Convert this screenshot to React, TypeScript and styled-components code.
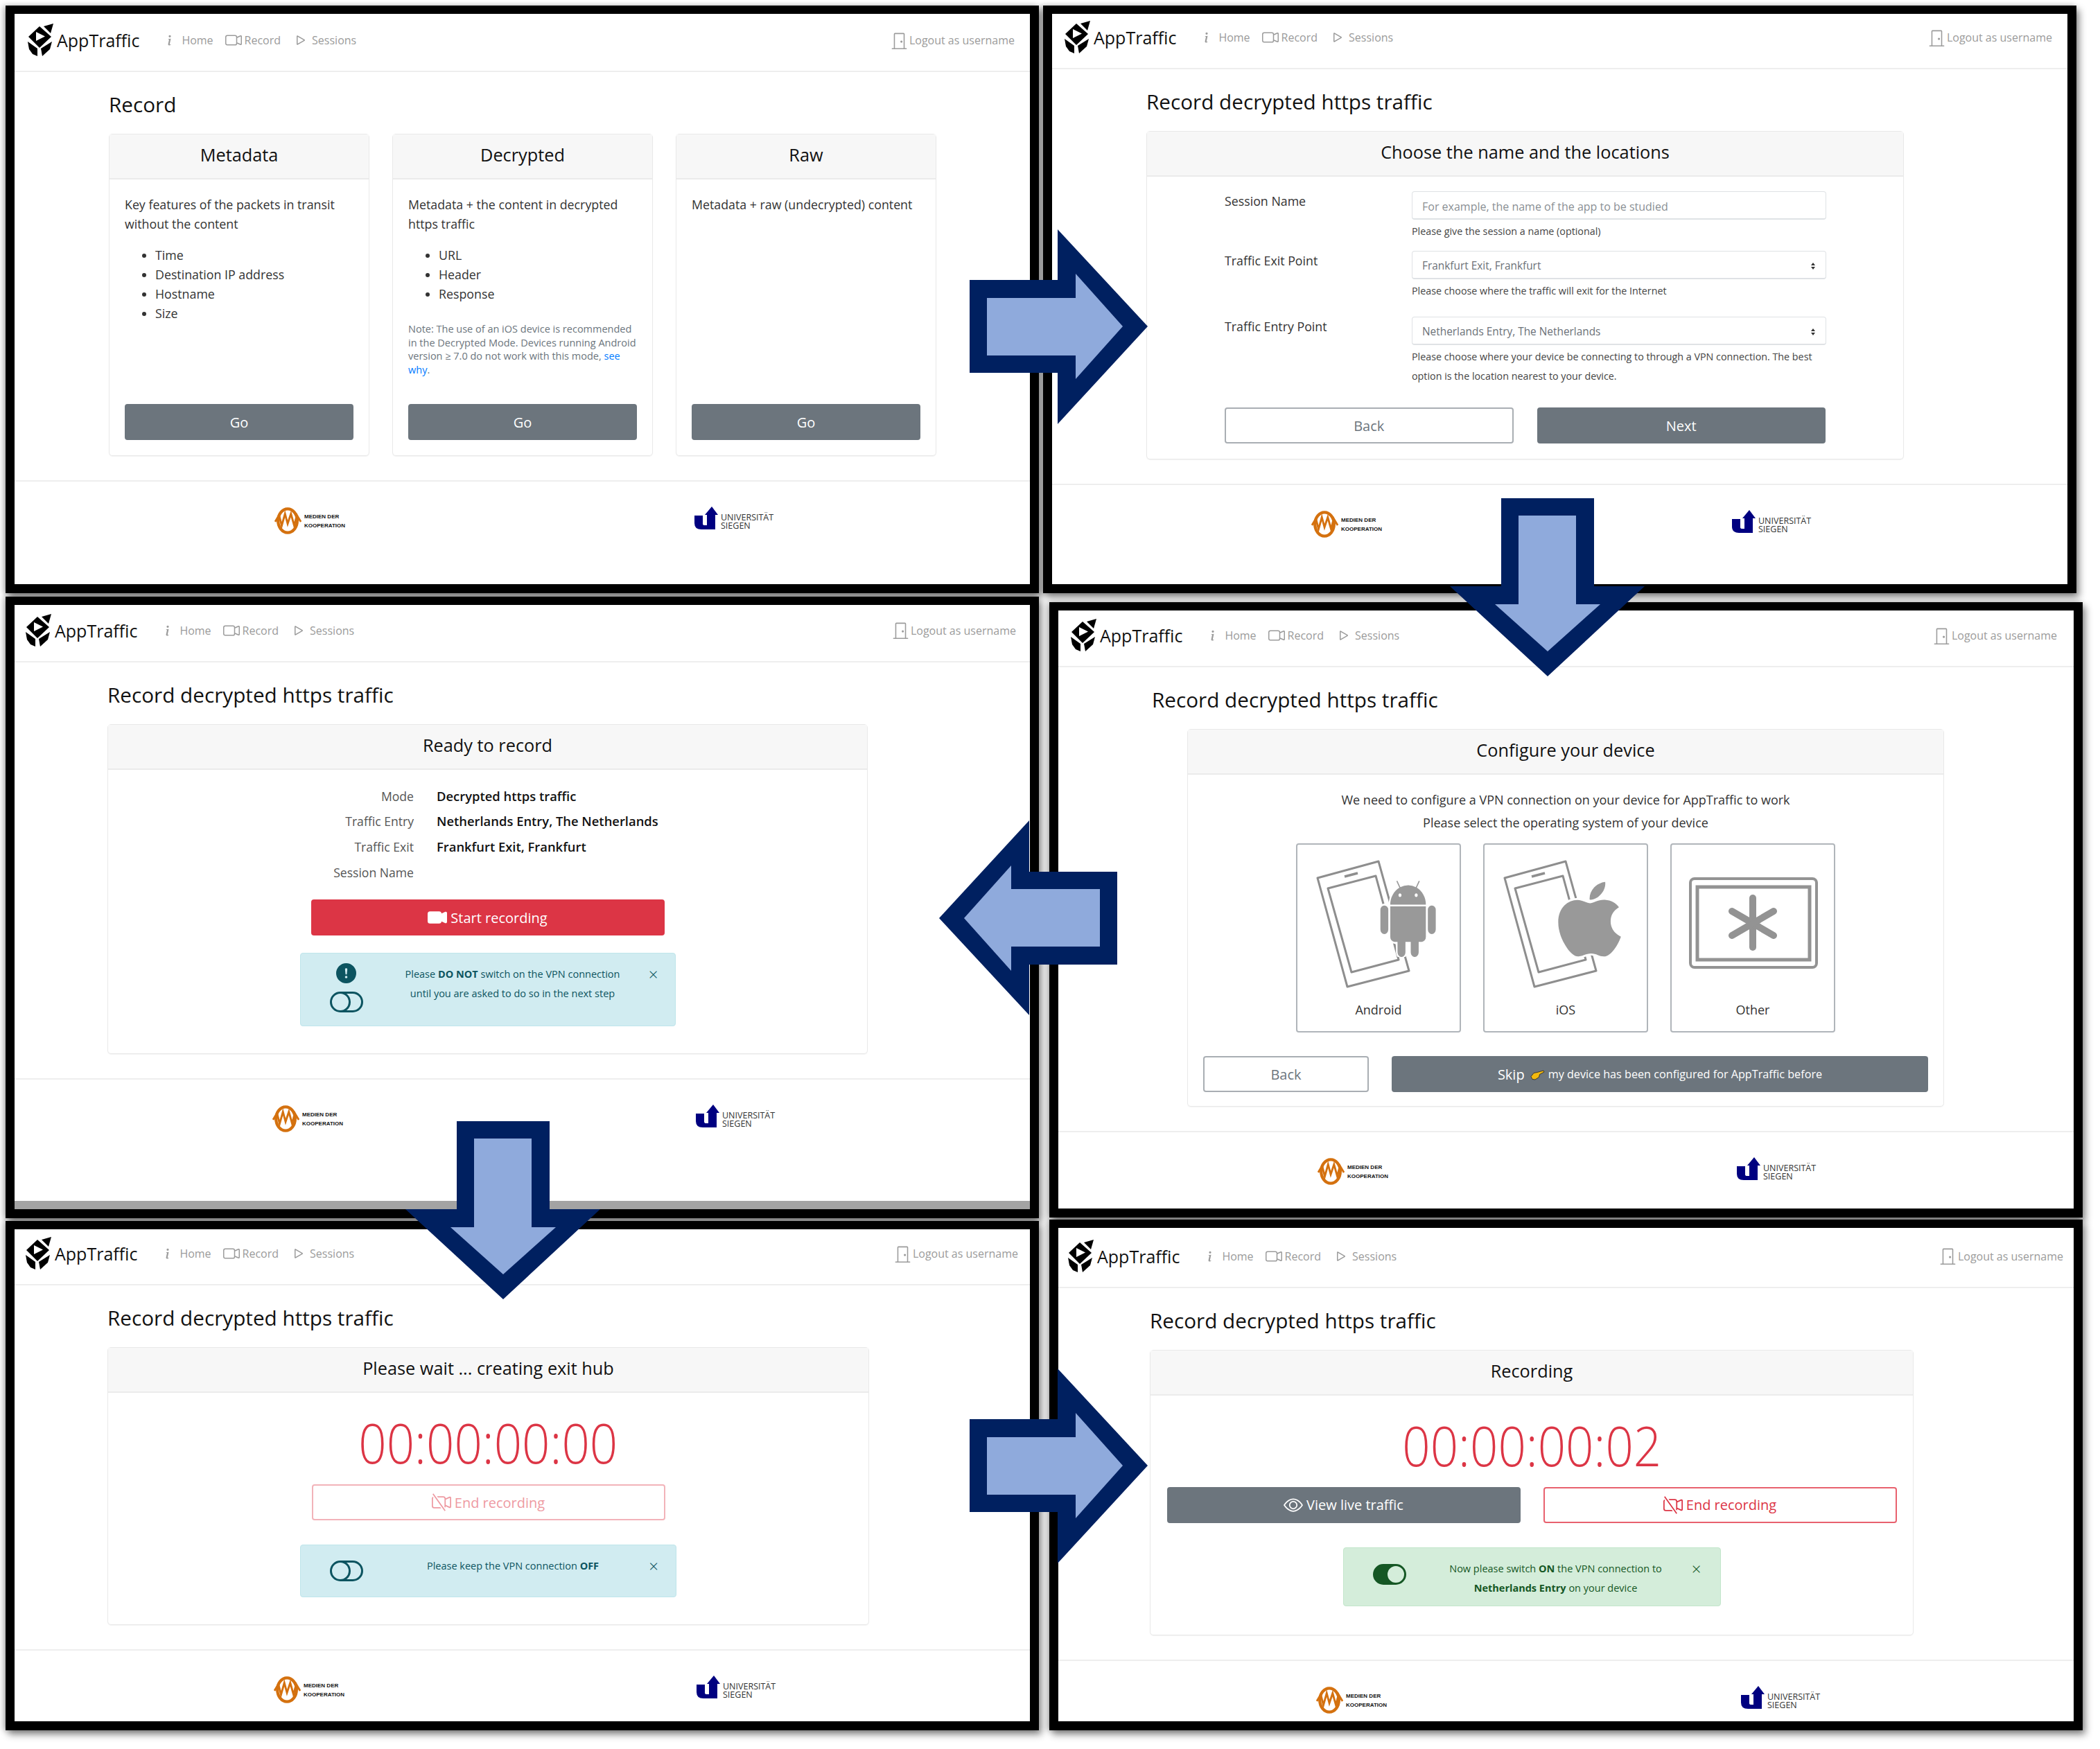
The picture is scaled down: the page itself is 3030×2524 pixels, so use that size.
import React from "react";
import styled, { createGlobalStyle } from "styled-components";
import { FaApple } from "react-icons/fa";
import {
  BsAndroid2,
  BsCameraVideo,
  BsCameraVideoFill,
  BsCameraVideoOff,
  BsDoorClosed,
  BsExclamationCircleFill,
  BsEye,
  BsInfo,
  BsPlay,
  BsToggleOff,
  BsToggleOn,
} from "react-icons/bs";

const GlobalStyle = createGlobalStyle`
  html, body {
    margin: 0;
    background: #fff;
  }
  body {
    font-family: "Open Sans", "Liberation Sans", sans-serif;
    color: #212529;
  }
  * {
    box-sizing: border-box;
  }
`;

const Page = styled.div`
  position: relative;
  display: flex;
  width: 3030px;
  height: 2524px;
  padding: 8px 0 0 8px;
  overflow: hidden;
  background: #fff;
`;

const Column = styled.div<{ $ml?: number }>`
  display: flex;
  flex-direction: column;
  width: 1491px;
  margin-left: ${(p) => p.$ml ?? 0}px;
`;

const Shot = styled.section<{ $h: number; $mt: number; $ml: number }>`
  width: 1491px;
  height: ${(p) => p.$h}px;
  margin-top: ${(p) => p.$mt}px;
  margin-left: ${(p) => p.$ml}px;
  border: 13px solid #000;
  border-top-width: 12px;
  box-shadow: 4px 6px 10px rgba(0, 0, 0, 0.45), -3px 0 8px rgba(0, 0, 0, 0.25);
`;

const Inner = styled.div<{ $strip?: boolean }>`
  height: 100%;
  background: #fff;
  overflow: hidden;
  box-shadow: ${(p) => (p.$strip ? "inset 0 -12px 0 #a3a3a3" : "none")};
`;

const Nav = styled.header<{ $h: number; $l: number; $r: number }>`
  display: flex;
  align-items: flex-end;
  height: ${(p) => p.$h}px;
  padding: 0 ${(p) => p.$r}px 20px ${(p) => p.$l}px;
  border-bottom: 2px solid #eee;
`;

const NavRow = styled.div`
  display: flex;
  flex: 1;
  align-items: center;
  height: 48px;
`;

const Brand = styled.div`
  display: flex;
  align-items: center;
  gap: 5px;
  font-size: 25px;
  color: #111;
`;

const NavLinks = styled.nav`
  display: flex;
  align-items: center;
  gap: 17px;
  margin-left: 31px;
`;

const NavLink = styled.span`
  display: flex;
  align-items: center;
  gap: 4px;
  font-size: 16px;
  color: #9b9b9b;
`;

const Logout = styled(NavLink)`
  margin-left: auto;
  gap: 2px;
`;

const Main = styled.main<{ $l: number }>`
  padding: 26px 0 0 ${(p) => p.$l}px;
`;

const Title = styled.h1`
  margin: 0 0 21px;
  font-size: 29.7px;
  font-weight: 500;
  line-height: 42px;
  color: #111;
`;

const CardRow = styled.div`
  display: grid;
  grid-template-columns: repeat(3, 376px);
  gap: 33px;
`;

const Card = styled.div<{ $w: number; $h: number; $ml?: number }>`
  display: flex;
  flex-direction: column;
  width: ${(p) => p.$w}px;
  height: ${(p) => p.$h}px;
  margin-left: ${(p) => p.$ml ?? 0}px;
  border: 1px solid #e9e9e9;
  border-radius: 5px;
  box-shadow: 0 1px 1px rgba(0, 0, 0, 0.05);
`;

const CardHeader = styled.div`
  display: flex;
  flex: none;
  align-items: center;
  justify-content: center;
  height: 65px;
  padding-bottom: 5px;
  background: #f7f7f7;
  border-bottom: 2px solid #ebebeb;
  font-size: 25.3px;
  font-weight: 500;
  color: #111;
`;

const ChoiceBody = styled.div`
  display: flex;
  flex: 1;
  flex-direction: column;
  padding: 22px;
  font-size: 17.8px;
  line-height: 28px;
  color: #333;
`;

const Para = styled.p`
  margin: 0;
`;

const Bullets = styled.ul`
  margin: 17px 0 0;
  padding-left: 44px;
`;

const Note = styled.p`
  margin: 27px 0 0;
  font-size: 14.5px;
  line-height: 19.5px;
  color: #6c757d;
  a {
    color: #007bff;
  }
`;

const Btn = styled.button<{ $kind: "gray" | "line" | "red" | "redLine" | "redOff"; $w?: number }>`
  display: flex;
  flex: ${(p) => (p.$w ? "none" : "1")};
  align-items: center;
  justify-content: center;
  gap: 5px;
  width: ${(p) => (p.$w ? `${p.$w}px` : "auto")};
  height: 52px;
  padding: 0;
  border-radius: 4px;
  font-family: inherit;
  font-size: 20px;
  border: 2px solid
    ${(p) =>
      ({ gray: "#6c757d", line: "#a9aeb3", red: "#dc3545", redLine: "#e8616e", redOff: "#f2b3b9" })[p.$kind]};
  background: ${(p) => ({ gray: "#6c757d", line: "#fff", red: "#dc3545", redLine: "#fff", redOff: "#fff" })[p.$kind]};
  color: ${(p) => ({ gray: "#fff", line: "#6c757d", red: "#fff", redLine: "#dc3545", redOff: "#ee9aa2" })[p.$kind]};
`;

const GoButton = styled(Btn)`
  flex: none;
  margin-top: auto;
`;

const FormBody = styled.div`
  padding: 21px 112px 0;
`;

const FormRow = styled.div<{ $mb: number }>`
  display: grid;
  grid-template-columns: 270px 598px;
  margin-bottom: ${(p) => p.$mb}px;
`;

const FieldLabel = styled.label`
  font-size: 17.8px;
  line-height: 28px;
  color: #333;
`;

const NameInput = styled.input`
  display: block;
  width: 100%;
  height: 41px;
  padding: 3px 14px 0;
  border: 1px solid #dfe2e5;
  border-bottom-width: 2px;
  border-radius: 4px;
  font-family: inherit;
  font-size: 16px;
  &::placeholder {
    color: #8a8f94;
  }
`;

const FakeSelect = styled.div`
  display: flex;
  align-items: center;
  justify-content: space-between;
  height: 41px;
  padding: 3px 14px 0;
  border: 1px solid #dfe2e5;
  border-bottom-width: 2px;
  border-radius: 4px;
  font-size: 15.4px;
  color: #6b7178;
`;

const Help = styled.div`
  margin-top: 3px;
  font-size: 14.3px;
  line-height: 28px;
  color: #444;
`;

const ButtonRow = styled.div<{ $mt?: number; $gap: number; $px?: number }>`
  display: flex;
  gap: ${(p) => p.$gap}px;
  margin-top: ${(p) => p.$mt ?? 0}px;
  padding: 0 ${(p) => p.$px ?? 0}px;
`;

const SummaryBody = styled.div`
  display: flex;
  flex-direction: column;
  align-items: center;
  padding-top: 20px;
`;

const Summary = styled.dl`
  display: grid;
  grid-template-columns: 441px 1fr;
  column-gap: 33px;
  align-self: stretch;
  margin: 0 0 21px;
  font-size: 17.6px;
  line-height: 36.7px;
`;

const SummaryKey = styled.dt`
  text-align: right;
  color: #555;
`;

const SummaryValue = styled.dd`
  margin: 0;
  font-size: 18.4px;
  font-weight: 600;
  color: #111;
`;

const WideButton = styled(Btn)`
  flex: none;
  width: 510px;
`;

const Alert = styled.div<{ $tone: "info" | "ok"; $h: number; $w: number; $mt: number }>`
  display: grid;
  grid-template-columns: 132px 348px 58px;
  width: ${(p) => p.$w}px;
  height: ${(p) => p.$h}px;
  margin-top: ${(p) => p.$mt}px;
  border: 1px solid ${(p) => (p.$tone === "ok" ? "#c3e6cb" : "#bee5eb")};
  border-radius: 4px;
  background: ${(p) => (p.$tone === "ok" ? "#d4edda" : "#d1ecf1")};
  color: ${(p) => (p.$tone === "ok" ? "#155724" : "#0c5460")};
`;

const AlertIcons = styled.div<{ $top: number }>`
  display: flex;
  flex-direction: column;
  align-items: center;
  gap: 3px;
  padding-top: ${(p) => p.$top}px;
`;

const AlertText = styled.div`
  padding-top: 16px;
  font-size: 14.5px;
  line-height: 28px;
  text-align: center;
  white-space: nowrap;
`;

const AlertClose = styled.div`
  padding-top: 16px;
  font-size: 24px;
  font-weight: 300;
  line-height: 28px;
  text-align: center;
`;

const TileBody = styled.div`
  padding: 20px 22px 0;
`;

const CenterLine = styled.div`
  font-size: 18px;
  line-height: 33px;
  text-align: center;
  color: #333;
`;

const Tiles = styled.div`
  display: flex;
  justify-content: center;
  gap: 32px;
  margin-top: 13px;
`;

const Tile = styled.div`
  display: flex;
  flex-direction: column;
  align-items: center;
  width: 238px;
  height: 273px;
  border: 2px solid #b0b5ba;
  border-radius: 4px;
  font-size: 18px;
  color: #333;
`;

const TileArt = styled.svg`
  flex: none;
  width: 234px;
  height: 224px;
`;

const TileLabel = styled.div`
  line-height: 28px;
`;

const RobotIcon = styled(BsAndroid2)`
  color: #999;
  stroke: #fff;
  stroke-width: 0.8px;
  paint-order: stroke;
`;

const AppleIcon = styled(FaApple)`
  color: #999;
  stroke: #fff;
  stroke-width: 24px;
  paint-order: stroke;
`;

const SkipNote = styled.span`
  font-size: 16.2px;
`;

const Hand = styled.svg`
  width: 21px;
  height: 15px;
  margin: 3px 0 0 3px;
`;

const TimerBody = styled.div`
  display: flex;
  flex-direction: column;
  align-items: center;
  padding-top: 21px;
`;

const Timer = styled.div`
  margin-bottom: 11px;
  font-size: 80px;
  font-weight: 300;
  line-height: 100px;
  color: #dc3545;
  transform: scaleX(0.885);
`;

const Footer = styled.footer<{ $a: number; $b: number }>`
  display: flex;
  align-items: flex-start;
  gap: ${(p) => p.$b - p.$a - 102}px;
  margin-top: 35px;
  padding: 36px 0 0 ${(p) => p.$a}px;
  border-top: 2px solid #eee;
`;

const LogoBlock = styled.div`
  display: flex;
  flex: none;
  gap: 4px;
  width: 102px;
`;

const MdkText = styled.div`
  margin-top: 8px;
  font-family: "Liberation Sans", sans-serif;
  font-size: 8px;
  font-weight: 700;
  line-height: 13px;
  white-space: nowrap;
  color: #111;
`;

const SiegenText = styled.div`
  margin-top: 10px;
  font-size: 12.5px;
  line-height: 12px;
  white-space: nowrap;
  color: #333;
`;

const ArrowMark = styled.svg<{ $x: number; $y: number; $deg: number }>`
  position: absolute;
  left: ${(p) => p.$x}px;
  top: ${(p) => p.$y}px;
  width: 257px;
  height: 281px;
  transform: rotate(${(p) => p.$deg}deg);
`;

function Arrow({ x, y, deg }: { x: number; y: number; deg: number }) {
  return (
    <ArrowMark $x={x} $y={y} $deg={deg} viewBox="0 0 257 281">
      <polygon points="0,73 127,73 127,0 257,140 127,281 127,207 0,207" fill="#002060" />
      <polygon points="25,99 153,99 153,64 221,140 153,216 153,182 25,182" fill="#8faadc" />
    </ArrowMark>
  );
}

function AppLogo() {
  return (
    <svg width="38" height="50" viewBox="9 8 38 50">
      <path d="M11 28 27 13 44 28 27 44Z M22 21 V34 L35 27.5Z" fill="#000" fillRule="evenodd" />
      <polygon points="33,13 47,9 43,23" fill="#000" />
      <polygon points="10,35 24,45 24,56 17,53 12,46" fill="#000" />
      <polygon points="29,45 45,35 42,46 31,56" fill="#000" />
    </svg>
  );
}

function MdkLogo() {
  return (
    <LogoBlock>
      <svg width="41" height="41" viewBox="0 0 41 41" fill="none" stroke="#d4710f">
        <ellipse cx="20" cy="20.5" rx="14.5" ry="18" strokeWidth="4.5" />
        <path d="M1 22 7 12 11 28 16 10 20 25 25 10 30 28 34 12 40 22" strokeWidth="3" />
      </svg>
      <MdkText>
        MEDIEN DER
        <br />
        KOOPERATION
      </MdkText>
    </LogoBlock>
  );
}

function SiegenLogo() {
  return (
    <LogoBlock>
      <svg width="34" height="33" viewBox="0 0 34 33" style={{ flex: "none" }}>
        <path d="M0 13H12V25Q12 27 15 27H18V12H15L25 0 34 12H30V33H10Q0 33 0 24Z" fill="#000080" />
      </svg>
      <SiegenText>
        UNIVERSITÄT
        <br />
        SIEGEN
      </SiegenText>
    </LogoBlock>
  );
}

function Frame(props: {
  h: number;
  mt?: number;
  ml?: number;
  nav: number;
  l: number;
  r: number;
  main: number;
  a: number;
  b: number;
  title: string;
  strip?: boolean;
  children: React.ReactNode;
}) {
  return (
    <Shot $h={props.h} $mt={props.mt ?? 0} $ml={props.ml ?? 0}>
      <Inner $strip={props.strip}>
        <Nav $h={props.nav} $l={props.l} $r={props.r}>
          <NavRow>
            <Brand>
              <AppLogo />
              AppTraffic
            </Brand>
            <NavLinks>
              <NavLink>
                <BsInfo size={26} />
                Home
              </NavLink>
              <NavLink>
                <BsCameraVideo size={24} />
                Record
              </NavLink>
              <NavLink>
                <BsPlay size={24} />
                Sessions
              </NavLink>
            </NavLinks>
            <Logout>
              <BsDoorClosed size={25} />
              Logout as username
            </Logout>
          </NavRow>
        </Nav>
        <Main $l={props.main}>
          <Title>{props.title}</Title>
          {props.children}
        </Main>
        <Footer $a={props.a} $b={props.b}>
          <MdkLogo />
          <SiegenLogo />
        </Footer>
      </Inner>
    </Shot>
  );
}

function PhoneOutline() {
  return (
    <g fill="none" stroke="#8e8e8e" strokeWidth="3" strokeLinejoin="round">
      <polygon points="29,48 117,24 161,182 72,205" />
      <polygon points="44,63 113,45 146,166 78,184" />
      <line x1="68" y1="46" x2="87" y2="41" strokeWidth="3.5" />
    </g>
  );
}

const choices = [
  {
    name: "Metadata",
    text: "Key features of the packets in transit without the content",
    items: ["Time", "Destination IP address", "Hostname", "Size"],
  },
  {
    name: "Decrypted",
    text: "Metadata + the content in decrypted https traffic",
    items: ["URL", "Header", "Response"],
    note: true,
  },
  { name: "Raw", text: "Metadata + raw (undecrypted) content", items: [] as string[] },
];

const Caret = () => (
  <svg width="8" height="12" viewBox="0 0 8 12" fill="#333">
    <polygon points="4,1 7,5 1,5" />
    <polygon points="4,11 7,7 1,7" />
  </svg>
);

export default function App() {
  return (
    <Page>
      <GlobalStyle />
      <Column>
        <Frame h={848} nav={84} l={18} r={22} main={136} a={375} b={981} title="Record">
          <CardRow>
            {choices.map((c) => (
              <Card key={c.name} $w={376} $h={465}>
                <CardHeader>{c.name}</CardHeader>
                <ChoiceBody>
                  <Para>{c.text}</Para>
                  {c.items.length > 0 && (
                    <Bullets>
                      {c.items.map((i) => (
                        <li key={i}>{i}</li>
                      ))}
                    </Bullets>
                  )}
                  {c.note && (
                    <Note>
                      Note: The use of an iOS device is recommended in the Decrypted Mode. Devices running Android
                      <br />
                      version ≥ 7.0 do not work with this mode, <a>see</a>
                      <br />
                      <a>why</a>.
                    </Note>
                  )}
                  <GoButton $kind="gray">Go</GoButton>
                </ChoiceBody>
              </Card>
            ))}
          </CardRow>
        </Frame>

        <Frame
          h={897}
          mt={5}
          nav={82.5}
          l={15}
          r={20}
          main={134}
          a={372}
          b={983}
          title="Record decrypted https traffic"
          strip
        >
          <Card $w={1097} $h={476}>
            <CardHeader>Ready to record</CardHeader>
            <SummaryBody>
              <Summary>
                <SummaryKey>Mode</SummaryKey>
                <SummaryValue>Decrypted https traffic</SummaryValue>
                <SummaryKey>Traffic Entry</SummaryKey>
                <SummaryValue>Netherlands Entry, The Netherlands</SummaryValue>
                <SummaryKey>Traffic Exit</SummaryKey>
                <SummaryValue>Frankfurt Exit, Frankfurt</SummaryValue>
                <SummaryKey>Session Name</SummaryKey>
                <SummaryValue />
              </Summary>
              <WideButton $kind="red">
                <BsCameraVideoFill size={28} />
                Start recording
              </WideButton>
              <Alert $tone="info" $w={542} $h={106} $mt={25}>
                <AlertIcons $top={14}>
                  <BsExclamationCircleFill size={29} />
                  <BsToggleOff size={48} />
                </AlertIcons>
                <AlertText>
                  Please <b>DO NOT</b> switch on the VPN connection
                  <br />
                  until you are asked to do so in the next step
                </AlertText>
                <AlertClose>×</AlertClose>
              </Alert>
            </SummaryBody>
          </Card>
        </Frame>

        <Frame
          h={735}
          mt={4}
          nav={81}
          l={15}
          r={17}
          main={134}
          a={374}
          b={984}
          title="Record decrypted https traffic"
        >
          <Card $w={1099} $h={401}>
            <CardHeader>Please wait ... creating exit hub</CardHeader>
            <TimerBody>
              <Timer>00:00:00:00</Timer>
              <WideButton $kind="redOff">
                <BsCameraVideoOff size={28} />
                End recording
              </WideButton>
              <Alert $tone="info" $w={543} $h={76} $mt={35}>
                <AlertIcons $top={13}>
                  <BsToggleOff size={48} />
                </AlertIcons>
                <AlertText>
                  Please keep the VPN connection <b>OFF</b>
                </AlertText>
                <AlertClose>×</AlertClose>
              </Alert>
            </TimerBody>
          </Card>
        </Frame>
      </Column>

      <Column $ml={6}>
        <Frame
          h={848}
          nav={80}
          l={17}
          r={22}
          main={136}
          a={374}
          b={981}
          title="Record decrypted https traffic"
        >
          <Card $w={1093} $h={474}>
            <CardHeader>Choose the name and the locations</CardHeader>
            <FormBody>
              <FormRow $mb={14}>
                <FieldLabel>Session Name</FieldLabel>
                <div>
                  <NameInput placeholder="For example, the name of the app to be studied" />
                  <Help>Please give the session a name (optional)</Help>
                </div>
              </FormRow>
              <FormRow $mb={23}>
                <FieldLabel>Traffic Exit Point</FieldLabel>
                <div>
                  <FakeSelect>
                    Frankfurt Exit, Frankfurt
                    <Caret />
                  </FakeSelect>
                  <Help>Please choose where the traffic will exit for the Internet</Help>
                </div>
              </FormRow>
              <FormRow $mb={31}>
                <FieldLabel>Traffic Entry Point</FieldLabel>
                <div>
                  <FakeSelect>
                    Netherlands Entry, The Netherlands
                    <Caret />
                  </FakeSelect>
                  <Help>
                    Please choose where your device be connecting to through a VPN connection. The best option is the
                    location nearest to your device.
                  </Help>
                </div>
              </FormRow>
              <ButtonRow $gap={34}>
                <Btn $kind="line">Back</Btn>
                <Btn $kind="gray">Next</Btn>
              </ButtonRow>
            </FormBody>
          </Card>
        </Frame>

        <Frame
          h={888}
          mt={13}
          ml={9}
          nav={82}
          l={17}
          r={24}
          main={135}
          a={374}
          b={979}
          title="Record decrypted https traffic"
        >
          <Card $w={1092} $h={545} $ml={51}>
            <CardHeader>Configure your device</CardHeader>
            <TileBody>
              <CenterLine>We need to configure a VPN connection on your device for AppTraffic to work</CenterLine>
              <CenterLine>Please select the operating system of your device</CenterLine>
              <Tiles>
                <Tile>
                  <TileArt viewBox="0 0 234 224">
                    <PhoneOutline />
                    <g transform="translate(114 52) scale(0.83 1)">
                      <RobotIcon size={110} />
                    </g>
                  </TileArt>
                  <TileLabel>Android</TileLabel>
                </Tile>
                <Tile>
                  <TileArt viewBox="0 0 234 224">
                    <PhoneOutline />
                    <AppleIcon x={90} y={46} size={123} />
                  </TileArt>
                  <TileLabel>iOS</TileLabel>
                </Tile>
                <Tile>
                  <TileArt viewBox="0 0 234 224">
                    <g fill="none" stroke="#939393">
                      <rect x="27" y="49" width="182" height="128" rx="6" strokeWidth="4" />
                      <rect x="37" y="61" width="162" height="105" strokeWidth="5" />
                      <g strokeWidth="10" strokeLinecap="round">
                        <line x1="117" y1="77" x2="117" y2="148" />
                        <line x1="87" y1="96" x2="147" y2="131" />
                        <line x1="87" y1="131" x2="147" y2="96" />
                      </g>
                    </g>
                  </TileArt>
                  <TileLabel>Other</TileLabel>
                </Tile>
              </Tiles>
              <ButtonRow $mt={34} $gap={33}>
                <Btn $kind="line" $w={239}>
                  Back
                </Btn>
                <Btn $kind="gray">
                  Skip
                  <Hand viewBox="0 0 21 15">
                    <path
                      d="M1 9.5 5 4.5 10 3.5 19 1 20 3 13.5 6.5 12.5 10.5 7 14 3 13.5Z"
                      fill="#f2b90f"
                      stroke="#222"
                      strokeWidth="0.8"
                    />
                  </Hand>
                  <SkipNote>my device has been configured for AppTraffic before</SkipNote>
                </Btn>
              </ButtonRow>
            </TileBody>
          </Card>
        </Frame>

        <Frame
          h={737}
          mt={3}
          ml={9}
          nav={86.5}
          l={13}
          r={15}
          main={132}
          a={372}
          b={985}
          title="Record decrypted https traffic"
        >
          <Card $w={1102} $h={412}>
            <CardHeader>Recording</CardHeader>
            <TimerBody>
              <Timer>00:00:00:02</Timer>
              <ButtonRow $gap={33}>
                <WideButton $kind="gray">
                  <BsEye size={28} />
                  View live traffic
                </WideButton>
                <WideButton $kind="redLine">
                  <BsCameraVideoOff size={28} />
                  End recording
                </WideButton>
              </ButtonRow>
              <Alert $tone="ok" $w={545} $h={85} $mt={35}>
                <AlertIcons $top={14}>
                  <BsToggleOn size={48} />
                </AlertIcons>
                <AlertText>
                  Now please switch <b>ON</b> the VPN connection to
                  <br />
                  <b>Netherlands Entry</b> on your device
                </AlertText>
                <AlertClose>×</AlertClose>
              </Alert>
            </TimerBody>
          </Card>
        </Frame>
      </Column>

      <Arrow x={1399} y={331} deg={0} />
      <Arrow x={2103.5} y={706.5} deg={90} />
      <Arrow x={1355} y={1183.5} deg={180} />
      <Arrow x={597} y={1605.5} deg={90} />
      <Arrow x={1399} y={1975} deg={0} />
    </Page>
  );
}
